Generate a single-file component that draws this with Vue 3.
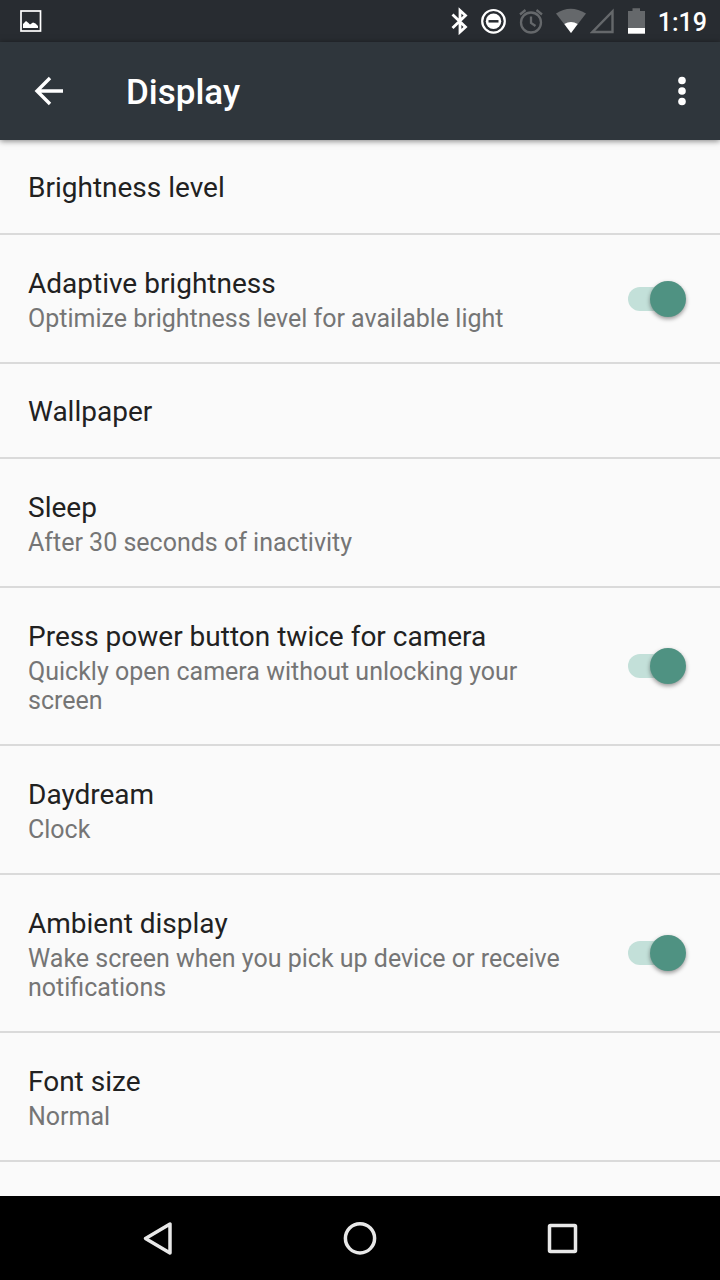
<script setup>
import { reactive } from 'vue'

const settings = reactive([
  { id: 'brightness', title: 'Brightness level' },
  { id: 'adaptive', title: 'Adaptive brightness', summary: 'Optimize brightness level for available light', toggle: true, on: true },
  { id: 'wallpaper', title: 'Wallpaper' },
  { id: 'sleep', title: 'Sleep', summary: 'After 30 seconds of inactivity' },
  { id: 'camera', title: 'Press power button twice for camera', summary: 'Quickly open camera without unlocking your screen', toggle: true, on: true },
  { id: 'daydream', title: 'Daydream', summary: 'Clock' },
  { id: 'ambient', title: 'Ambient display', summary: 'Wake screen when you pick up device or receive notifications', toggle: true, on: true },
  { id: 'font', title: 'Font size', summary: 'Normal' }
])
</script>

<template>
  <div class="screen">
    <div class="status">
      <svg class="picture" width="22" height="22" viewBox="0 0 22 22" aria-hidden="true">
        <rect x="1" y="1" width="19.5" height="20" fill="none" stroke="#fff" stroke-width="1.7" />
        <path d="M3 18V14L6 11L8.5 13L10 14.5L13 12.5L15.5 13.5L18 16V18Z" fill="#fff" />
      </svg>
      <div class="indicators">
        <svg width="20" height="28" viewBox="0 0 20 28" aria-hidden="true">
          <path d="M2.5 7.5L15.5 20L10 25V3.5L15.5 8.5L2.5 21" fill="none" stroke="#fff" stroke-width="2.8" />
        </svg>
        <svg width="28" height="28" viewBox="0 0 28 28" aria-hidden="true">
          <circle cx="13.5" cy="14.3" r="11.3" fill="none" stroke="#fff" stroke-width="2.2" />
          <circle cx="13.5" cy="14.3" r="7.7" fill="#fff" />
          <path d="M8.5 14.3H18.5" stroke="#282c31" stroke-width="2.5" />
        </svg>
        <svg width="28" height="28" viewBox="0 0 28 28" fill="none" stroke="#65686b" stroke-width="2.3" aria-hidden="true">
          <circle cx="13" cy="15.5" r="10" />
          <path d="M13 9.5V16L17.5 19M2 7.5L7.5 3M18.5 3L24 7.5" />
        </svg>
        <div class="network">
          <svg width="30" height="28" viewBox="0 0 30 28" aria-hidden="true">
            <path d="M0 6.5Q14.5-3 30 6.5L15 26Z" fill="#65686b" />
            <path d="M8.3 17Q15 12.8 21.7 17L15 26Z" fill="#fff" />
          </svg>
          <svg width="24" height="28" viewBox="0 0 24 28" aria-hidden="true">
            <path d="M2.5 25H22.5V4.5Z" fill="none" stroke="#65686b" stroke-width="2.4" />
          </svg>
        </div>
        <svg width="24" height="28" viewBox="0 0 24 28" aria-hidden="true">
          <path d="M4 21V4H8.5V1.3H16V4H21V21Z" fill="#65686b" />
          <path d="M4 21H21V26.7H4Z" fill="#fff" />
        </svg>
        <time>1:19</time>
      </div>
    </div>

    <header class="bar">
      <button type="button" class="icon-button" aria-label="Navigate up">
        <svg width="30" height="30" viewBox="0 0 30 30" fill="none" stroke="#fff" stroke-width="3.4">
          <path d="M29 15H4M16 2L3 15L16 28" />
        </svg>
      </button>
      <h1>Display</h1>
      <button type="button" class="icon-button more" aria-label="More options">
        <svg width="8" height="30" viewBox="0 0 8 30" fill="#fff">
          <circle cx="4" cy="4.5" r="3.8" />
          <circle cx="4" cy="15" r="3.8" />
          <circle cx="4" cy="25.5" r="3.8" />
        </svg>
      </button>
    </header>

    <main>
      <ul class="list">
        <li v-for="item in settings" :key="item.id">
          <label v-if="item.toggle" class="row" :for="item.id">
            <span class="text">
              <span class="title">{{ item.title }}</span>
              <span class="summary">{{ item.summary }}</span>
            </span>
            <input :id="item.id" v-model="item.on" class="switch" type="checkbox" role="switch" />
          </label>
          <button v-else type="button" class="row" :class="{ single: !item.summary }">
            <span class="text">
              <span class="title">{{ item.title }}</span>
              <span v-if="item.summary" class="summary">{{ item.summary }}</span>
            </span>
          </button>
        </li>
      </ul>
    </main>

    <nav class="nav" aria-label="System">
      <button type="button" aria-label="Back">
        <svg width="32" height="36" viewBox="0 0 32 36"><path d="M3.5 18.5L28 4V33Z" /></svg>
      </button>
      <button type="button" aria-label="Home">
        <svg width="36" height="36" viewBox="0 0 36 36"><circle cx="18" cy="18.3" r="14.6" /></svg>
      </button>
      <button type="button" aria-label="Overview">
        <svg width="36" height="36" viewBox="0 0 36 36"><rect x="5.5" y="5.5" width="26" height="26" rx="1" /></svg>
      </button>
    </nav>
  </div>
</template>

<style>
body {
  background: #fafafa;
}
</style>

<style scoped>
.screen {
  display: flex;
  flex-direction: column;
  height: 100vh;
  overflow: hidden;
  background: #fafafa;
  color: #212121;
  font-family: Roboto, "Noto Sans", sans-serif;
}

svg {
  display: block;
  flex: none;
}

button {
  margin: 0;
  padding: 0;
  border: 0;
  background: none;
  color: inherit;
  font: inherit;
  cursor: pointer;
}

.status {
  display: flex;
  flex: none;
  align-items: center;
  justify-content: space-between;
  height: 42px;
  padding: 0 13px 0 20px;
  background: #282c31;
}

.indicators {
  display: flex;
  align-items: center;
  gap: 10px;
}

.network {
  display: flex;
  gap: 4px;
}

time {
  padding-top: 3px;
  color: #fff;
  font-size: 25px;
  font-weight: 500;
  line-height: 28px;
}

.bar {
  display: flex;
  flex: none;
  align-items: center;
  height: 98px;
  padding: 0 28px 0 20px;
  background: #2f363c;
  color: #fff;
  box-shadow: 0 1px 6px rgba(0, 0, 0, 0.5);
}

.icon-button {
  display: flex;
  align-items: center;
  justify-content: center;
  width: 58px;
  height: 58px;
}

.more {
  width: 20px;
}

h1 {
  flex: 1;
  margin: 0;
  padding: 4px 0 0 48px;
  font-size: 35px;
  font-weight: 500;
  line-height: 42px;
}

.status,
.bar {
  z-index: 1;
}

main {
  flex: 1;
  min-height: 0;
  overflow: hidden;
}

.list {
  margin: 0;
  padding: 0;
  list-style: none;
}

li {
  border-bottom: 2px solid #dadada;
}

.row {
  display: flex;
  align-items: center;
  justify-content: space-between;
  gap: 56px;
  box-sizing: border-box;
  width: 100%;
  padding: 29px 34px 29px 28px;
  text-align: left;
  cursor: pointer;
}

.single {
  padding-top: 28px;
  padding-bottom: 25px;
}

.text,
.title,
.summary {
  display: block;
}

.title {
  font-size: 28px;
  line-height: 40px;
}

.summary {
  color: #757575;
  font-size: 25px;
  line-height: 29px;
}

.switch {
  appearance: none;
  position: relative;
  flex: none;
  width: 58px;
  height: 36px;
  margin: 0;
  cursor: pointer;
}

.switch::before {
  content: "";
  position: absolute;
  top: 6px;
  left: 0;
  width: 52px;
  height: 24px;
  border-radius: 12px;
  background: #b9b9b9;
}

.switch::after {
  content: "";
  position: absolute;
  top: 0;
  left: 0;
  width: 36px;
  height: 36px;
  border-radius: 50%;
  background: #f1f1f1;
  box-shadow: 0 2px 4px rgba(0, 0, 0, 0.4);
}

.switch:checked::before {
  background: #c3e0d9;
}

.switch:checked::after {
  left: 22px;
  background: #4f9282;
}

.nav {
  display: flex;
  flex: none;
  justify-content: center;
  height: 84px;
  background: #000;
}

.nav button {
  display: flex;
  align-items: center;
  justify-content: center;
  width: 28%;
}

.nav svg {
  fill: none;
  stroke: #e8e8e8;
  stroke-width: 3.5;
  stroke-linejoin: round;
}
</style>
